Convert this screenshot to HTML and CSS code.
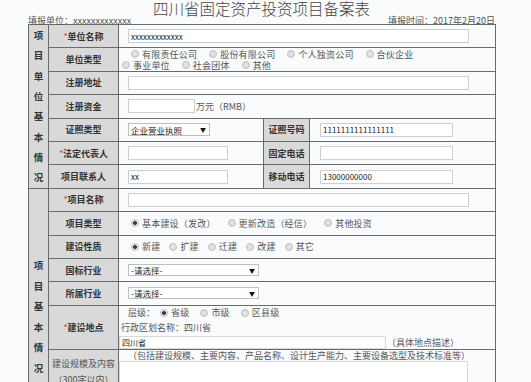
FILE: index.html
```html
<!DOCTYPE html>
<html>
<head>
    <meta charset="utf-8">
    <title>四川省固定资产投资项目备案表</title>
    <link rel="stylesheet" href="styles.css">
</head>
<body>
    <div class="page">
        <div class="title">四川省固定资产投资项目备案表</div>
        <div class="meta">
            <span>填报单位：xxxxxxxxxxxxx</span>
            <span>填报时间：2017年2月20日</span>
        </div>

        <table class="form">
            <colgroup>
                <col class="c_side">
                <col class="c_label">
                <col class="c_value">
                <col class="c_label2">
                <col class="c_value2">
            </colgroup>

            <!-- 项目单位基本情况 -->
            <tr class="row">
                <td class="side" rowspan="7"><div class="side_text">项目单位基本情况</div></td>
                <td class="label"><i class="req">*</i>单位名称</td>
                <td colspan="3"><input class="txt txt_full" value="xxxxxxxxxxxxx"></td>
            </tr>
            <tr class="row">
                <td class="label">单位类型</td>
                <td colspan="3" class="opts">
                    <div class="opt_line first">
                        <label class="opt"><span class="radio"></span>有限责任公司</label>
                        <label class="opt"><span class="radio"></span>股份有限公司</label>
                        <label class="opt"><span class="radio"></span>个人独资公司</label>
                        <label class="opt"><span class="radio"></span>合伙企业</label>
                    </div>
                    <div class="opt_line">
                        <label class="opt"><span class="radio"></span>事业单位</label>
                        <label class="opt"><span class="radio"></span>社会团体</label>
                        <label class="opt"><span class="radio"></span>其他</label>
                    </div>
                </td>
            </tr>
            <tr class="row">
                <td class="label">注册地址</td>
                <td colspan="3"><input class="txt txt_full" value=""></td>
            </tr>
            <tr class="row">
                <td class="label">注册资金</td>
                <td colspan="3">
                    <div class="inline">
                        <input class="txt txt_money" value="">
                        <span class="unit">万元（RMB）</span>
                    </div>
                </td>
            </tr>
            <tr class="row">
                <td class="label">证照类型</td>
                <td><div class="select sel_small"><span>企业营业执照</span><span class="arrow">▼</span></div></td>
                <td class="label">证照号码</td>
                <td class="right"><input class="txt txt_right" value="1111111111111111"></td>
            </tr>
            <tr class="row">
                <td class="label"><i class="req">*</i>法定代表人</td>
                <td><input class="txt txt_mid" value=""></td>
                <td class="label">固定电话</td>
                <td class="right"><input class="txt txt_right" value=""></td>
            </tr>
            <tr class="row">
                <td class="label">项目联系人</td>
                <td><input class="txt txt_mid" value="xx"></td>
                <td class="label">移动电话</td>
                <td class="right"><input class="txt txt_right" value="13000000000"></td>
            </tr>

            <!-- 项目基本情况 -->
            <tr class="row row_b">
                <td class="side" rowspan="8"><div class="side_text side_two">项目基本情况</div></td>
                <td class="label"><i class="req">*</i>项目名称</td>
                <td colspan="3"><input class="txt txt_full" value=""></td>
            </tr>
            <tr class="row">
                <td class="label">项目类型</td>
                <td colspan="3" class="opts">
                    <div class="opt_line first">
                        <label class="opt"><span class="radio on"></span>基本建设（发改）</label>
                        <label class="opt"><span class="radio"></span>更新改造（经信）</label>
                        <label class="opt"><span class="radio"></span>其他投资</label>
                    </div>
                </td>
            </tr>
            <tr class="row">
                <td class="label">建设性质</td>
                <td colspan="3" class="opts">
                    <div class="opt_line first tight">
                        <label class="opt"><span class="radio on"></span>新建</label>
                        <label class="opt"><span class="radio"></span>扩建</label>
                        <label class="opt"><span class="radio"></span>迁建</label>
                        <label class="opt"><span class="radio"></span>改建</label>
                        <label class="opt"><span class="radio"></span>其它</label>
                    </div>
                </td>
            </tr>
            <tr class="row">
                <td class="label">国标行业</td>
                <td colspan="3"><div class="select sel_wide"><span>-请选择-</span><span class="arrow">▼</span></div></td>
            </tr>
            <tr class="row">
                <td class="label">所属行业</td>
                <td colspan="3"><div class="select sel_wide"><span>-请选择-</span><span class="arrow">▼</span></div></td>
            </tr>
            <tr class="row_place">
                <td class="label"><i class="req">*</i>建设地点</td>
                <td colspan="3" class="place">
                    <div class="opt_line level">
                        <span class="level_text">层级：</span>
                        <label class="opt"><span class="radio on"></span>省级</label>
                        <label class="opt"><span class="radio"></span>市级</label>
                        <label class="opt"><span class="radio"></span>区县级</label>
                    </div>
                    <div class="region">行政区划名称：四川省</div>
                    <div class="inline">
                        <input class="txt txt_place" value="四川省">
                        <span class="unit">（具体地点描述）</span>
                    </div>
                </td>
            </tr>
            <tr class="row_scale">
                <td class="label label_top">建设规模及内容<br>（300字以内）</td>
                <td colspan="3" class="scale">
                    <div class="hint">（包括建设规模、主要内容、产品名称、设计生产能力、主要设备选型及技术标准等）</div>
                    <textarea class="area"></textarea>
                </td>
            </tr>
        </table>
    </div>
</body>
</html>
```

FILE: styles.css
```css
body {
    margin: 0;
    background-color: #fafbfd;
    color: #333;
    font-family: "Noto Sans CJK SC", "Microsoft YaHei", sans-serif;
    font-size: 9px;
}

.page {
    width: 467px;
    margin-left: 28px;
}

.title {
    text-align: center;
    font-size: 15.5px;
    font-weight: 300;
    line-height: 15px;
    padding-top: 1px;
    color: #444;
}

.meta {
    display: flex;
    justify-content: space-between;
    height: 8px;
    line-height: 9px;
    font-size: 9px;
    color: #555;
}

.form {
    width: 467px;
    table-layout: fixed;
    border-collapse: collapse;
    border: 1px solid #6b6b6b;
}

.c_side { width: 20px; }
.c_label { width: 70px; }
.c_value { width: 145px; }
.c_label2 { width: 46px; }
.c_value2 { width: 186px; }

.form td {
    border: 1px solid #6b6b6b;
    padding: 0 0 0 9px;
    vertical-align: middle;
}

.row {
    height: 23.4px;
}

.form td.side {
    background-color: #d9d9d9;
    padding: 0;
    font-weight: bold;
    font-size: 9.5px;
}

.side_text {
    width: 1em;
    margin: 0 auto;
    line-height: 20.3px;
    text-align: center;
}

.side_two {
    line-height: 20.6px;
    padding-top: 24px;
}

.form td.label {
    background-color: #d9d9d9;
    padding: 0;
    text-align: center;
    font-weight: bold;
    color: #333;
}

.req {
    color: #e23b3b;
    font-style: normal;
    font-weight: normal;
}

.form td.right {
    padding-left: 10px;
}

.txt {
    display: block;
    box-sizing: border-box;
    height: 14px;
    margin: 0;
    padding: 0 2px;
    border: 1px solid #cfcfcf;
    background-color: #fff;
    font-family: "Noto Sans CJK SC", "Microsoft YaHei", sans-serif;
    font-size: 8px;
    color: #222;
    outline: none;
}

.txt_full { width: 341px; }
.txt_money { width: 67px; }
.txt_mid { width: 100px; }
.txt_right { width: 133px; }
.txt_place { width: 267px; }

.inline {
    display: flex;
    align-items: center;
}

.unit {
    color: #555;
    padding-left: 1px;
}

.select {
    display: flex;
    justify-content: space-between;
    align-items: center;
    box-sizing: border-box;
    height: 13px;
    padding: 0 3px 0 2px;
    border: 1px solid #bfbfbf;
    background-color: #fff;
    font-size: 8.5px;
    color: #222;
}

.arrow {
    font-size: 6px;
    color: #111;
}

.sel_small { width: 82px; }
.sel_wide { width: 131px; height: 12px; }

.form td.opts {
    padding-left: 3px;
}

.opt_line {
    display: flex;
    align-items: center;
    line-height: 11px;
    color: #555;
}

.opt_line.first {
    padding-left: 9px;
}

.opt {
    display: flex;
    align-items: center;
    margin-right: 12px;
    letter-spacing: 0.2px;
}

.tight .opt {
    margin-right: 9px;
}

.radio {
    display: inline-block;
    box-sizing: border-box;
    width: 8px;
    height: 8px;
    margin-right: 3px;
    border: 1px solid #c4c4c4;
    border-radius: 50%;
    background: radial-gradient(circle, #e9e9e9 0, #d2d2d2 100%);
}

.radio.on {
    background: radial-gradient(circle, #3c3c3c 0, #3c3c3c 1.6px, #e4e4e4 2.2px, #d6d6d6 100%);
}

.row_place {
    height: 44px;
}

.form td.place {
    padding: 0;
}

.level {
    padding-left: 9px;
    height: 14px;
}

.level_text {
    margin-right: 5px;
}

.level .opt {
    margin-right: 11px;
}

.region {
    padding-left: 2px;
    line-height: 16px;
    color: #555;
}

.place .txt_place {
    height: 13px;
    border-color: #d8d8d8;
}

.row_scale {
    height: 72px;
}

.form td.label_top {
    vertical-align: top;
    padding-top: 6px;
    line-height: 16px;
    font-weight: normal;
    color: #555;
}

.form td.scale {
    padding: 0;
    vertical-align: top;
}

.hint {
    padding-left: 9px;
    line-height: 11px;
    color: #555;
}

.area {
    display: block;
    box-sizing: border-box;
    width: 349px;
    height: 60px;
    margin: 0;
    border: 1px solid #d8d8d8;
    background-color: #fff;
    resize: none;
}
```
